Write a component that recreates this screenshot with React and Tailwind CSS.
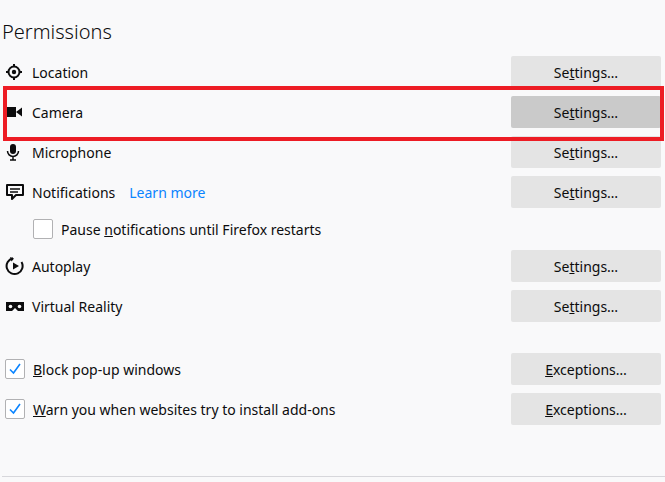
import React from "react";

const Btn = ({ children, active }) => (
  <div className={`w-[150px] h-[32px] rounded-[2px] flex items-center justify-center text-[14px] text-[#0c0c0d] ${active ? "bg-[#cacaca]" : "bg-[#e4e4e4]"}`}>{children}</div>
);

const Row = ({ icon, label, extra, btn, active }) => (
  <div className="h-[40px] flex items-center">
    <div className="w-[32px] flex items-center pl-[5px]">{icon}</div>
    <span>{label}</span>
    {extra}
    <div className="ml-auto mr-[4px]"><Btn active={active}>{btn}</Btn></div>
  </div>
);

const S = () => <>Se<u>t</u>tings…</>;
const E = () => <><u>E</u>xceptions…</>;

const Check = () => (
  <div className="w-[20px] h-[20px] border border-[#b1b1b3] bg-white rounded-[2px] flex items-center justify-center">
    <svg width="14" height="14" viewBox="0 0 14 14"><path d="M2 7.5 L5.5 11 L12 2" fill="none" stroke="#0a84ff" strokeWidth="1.6"/></svg>
  </div>
);

export default function App() {
  return (
    <div className="w-[665px] h-[482px] bg-[#f9f9fa] relative text-[#0c0c0d] text-[14px]" style={{ fontFamily: "'Noto Sans', sans-serif" }}>
      <div className="pt-[18px] pl-[2px] text-[20px] font-light leading-[28px]">Permissions</div>
      <div className="mt-[6px]">
        <Row label="Location" btn={<S />} icon={
          <svg width="18" height="18" viewBox="0 0 18 18"><circle cx="9" cy="9" r="5.5" fill="none" stroke="#0c0c0d" strokeWidth="2"/><circle cx="9" cy="9" r="2.2" fill="#0c0c0d"/><path d="M9 1v3M9 14v3M1 9h3M14 9h3" stroke="#0c0c0d" strokeWidth="2"/></svg>} />
        <Row label="Camera" btn={<S />} active icon={
          <svg width="18" height="14" viewBox="0 0 18 14"><rect x="0" y="2" width="11" height="10" fill="#0c0c0d"/><path d="M11 7 L17 2.5 V11.5 Z" fill="#0c0c0d"/></svg>} />
        <Row label="Microphone" btn={<S />} icon={
          <svg width="16" height="18" viewBox="0 0 16 18"><rect x="5" y="1" width="6" height="10" rx="3" fill="#0c0c0d"/><path d="M2.5 8a5.5 5.5 0 0 0 11 0M8 13.5v3M5 17h6" fill="none" stroke="#0c0c0d" strokeWidth="1.5"/></svg>} />
        <Row label="Notifications" btn={<S />} extra={<span className="ml-[14px] text-[#0a84ff]">Learn more</span>} icon={
          <svg width="20" height="20" viewBox="0 0 20 20"><path d="M2 3h16v10h-7l-4 4v-4H2z" fill="none" stroke="#0c0c0d" strokeWidth="2" strokeLinejoin="round"/><path d="M5 7h10M5 10h8" stroke="#0c0c0d" strokeWidth="1.6"/></svg>} />
        <div className="h-[34px] flex items-center pl-[33px]">
          <div className="w-[20px] h-[20px] border border-[#b1b1b3] bg-white rounded-[2px]"></div>
          <span className="ml-[8px] text-[14px]">Pause <u>n</u>otifications until Firefox restarts</span>
        </div>
        <Row label="Autoplay" btn={<S />} icon={
          <svg width="20" height="20" viewBox="0 0 20 20"><path d="M16.5 6A8 8 0 1 1 8 2.2" fill="none" stroke="#0c0c0d" strokeWidth="2"/><path d="M5 1l4 1.5-2.5 3z" fill="#0c0c0d"/><path d="M8 6.5v7l6-3.5z" fill="#0c0c0d"/></svg>} />
        <Row label="Virtual Reality" btn={<S />} icon={
          <svg width="20" height="14" viewBox="0 0 20 14"><path d="M1 3h18v9h-6l-3-3-3 3H1z" fill="#0c0c0d"/><circle cx="5.5" cy="7.5" r="1.8" fill="#f9f9fa"/><circle cx="14.5" cy="7.5" r="1.8" fill="#f9f9fa"/></svg>} />
      </div>
      <div className="mt-[23px]">
        <div className="h-[40px] flex items-center pl-[5px]">
          <Check /><span className="ml-[8px]"><u>B</u>lock pop-up windows</span>
          <div className="ml-auto mr-[4px]"><Btn><E /></Btn></div>
        </div>
        <div className="h-[40px] flex items-center pl-[5px]">
          <Check /><span className="ml-[8px]"><u>W</u>arn you when websites try to install add-ons</span>
          <div className="ml-auto mr-[4px]"><Btn><E /></Btn></div>
        </div>
      </div>
      <div className="absolute left-[2px] right-0 top-[476px] h-px bg-[#d7d7db]"></div>
      <div className="absolute left-[3px] top-[86px] w-[661px] h-[55px] border-[4px] border-[#ed1c24]"></div>
    </div>
  );
}
